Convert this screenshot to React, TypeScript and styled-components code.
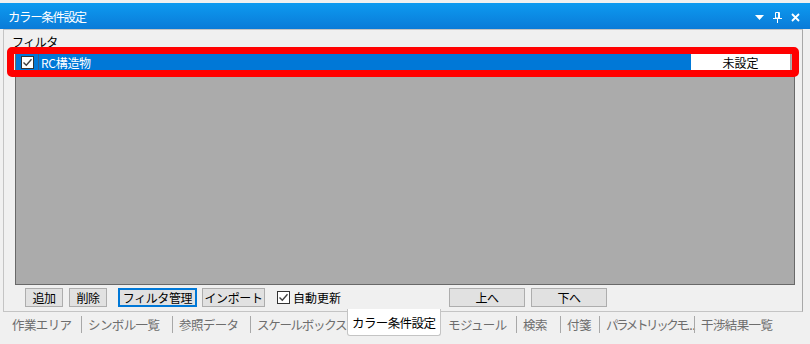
import React from "react";
import styled, { createGlobalStyle } from "styled-components";

const tabs = [
  { label: "作業エリア", w: 76 },
  { label: "シンボル一覧", w: 91 },
  { label: "参照データ", w: 78 },
  { label: "スケールボックス", w: 97, tight: true },
  { label: "カラー条件設定", w: 94, active: true },
  { label: "モジュール", w: 75 },
  { label: "検索", w: 44 },
  { label: "付箋", w: 39 },
  { label: "パラメトリックモ", w: 95, squeeze: true },
  { label: "干渉結果一覧", w: 96 },
];

const CheckMark = () => (
  <svg width="11" height="11" viewBox="0 0 11 11">
    <path d="M1.5 5.5 L4.3 8.3 L9.5 2.2" fill="none" stroke="#404040" strokeWidth="1.4" />
  </svg>
);

const App = () => {
  return (
    <>
      <GlobalStyle />
      <Window>
        <TitleBar>
          <Title>カラー条件設定</Title>
          <Controls>
            <svg width="9" height="5" viewBox="0 0 9 5">
              <path d="M0 0 H9 L4.5 5 Z" fill="#fff" />
            </svg>
            <svg width="9" height="11" viewBox="0 0 9 11">
              <path d="M2.5 0.5 H6.5 V6 H2.5 Z" fill="none" stroke="#fff" />
              <path d="M5.5 0.5 V6" stroke="#fff" />
              <path d="M0 6.5 H9" stroke="#fff" />
              <path d="M4.5 6.5 V11" stroke="#fff" />
            </svg>
            <svg width="9" height="9" viewBox="0 0 9 9">
              <path d="M1 1 L8 8 M8 1 L1 8" stroke="#fff" strokeWidth="1.8" />
            </svg>
          </Controls>
        </TitleBar>
        <Body>
          <GroupLabel>フィルタ</GroupLabel>
          <List>
            <Row>
              <CheckCell>
                <Box>
                  <CheckMark />
                </Box>
              </CheckCell>
              <NameCell>RC構造物</NameCell>
              <StatusCell>未設定</StatusCell>
            </Row>
          </List>
          <ButtonRow>
            <LeftGroup>
              <Button $w={38}>追加</Button>
              <Button $w={38} $ml={6}>
                削除
              </Button>
              <Button $w={79} $ml={11} $focused>
                フィルタ管理
              </Button>
              <Button $w={63} $ml={5}>
                インポート
              </Button>
              <CheckLabel>
                <Box>
                  <CheckMark />
                </Box>
                自動更新
              </CheckLabel>
            </LeftGroup>
            <Button $w={76}>上へ</Button>
            <Button $w={76} $ml={6}>
              下へ
            </Button>
          </ButtonRow>
        </Body>
        <TabBar>
          {tabs.map((t, i) => (
            <Tab
              key={t.label}
              $w={t.w}
              $active={!!t.active}
              $tight={!!t.tight}
              $sep={i > 0 && !t.active && !tabs[i - 1].active}
            >
              {t.squeeze ? (
                <>
                  <Squeeze>{t.label}</Squeeze>...
                </>
              ) : (
                t.label
              )}
            </Tab>
          ))}
        </TabBar>
        <Highlight />
      </Window>
    </>
  );
};

export default App;

const GlobalStyle = createGlobalStyle`
  html, body {
    margin: 0;
    padding: 0;
    background: #f0f0f0;
  }
  body {
    font-family: "Noto Sans CJK JP", "Noto Sans", sans-serif;
    font-size: 12px;
    color: #000;
  }
`;

const Window = styled.div`
  position: relative;
  width: 810px;
  height: 344px;
  padding-top: 3px;
  box-sizing: border-box;
  background: #f0f0f0;
  overflow: hidden;
`;

const TitleBar = styled.div`
  height: 26px;
  display: flex;
  align-items: center;
  padding: 0 10px 0 8px;
  background: linear-gradient(#0d9af0, #0a7bd8);
  color: #fff;
`;

const Title = styled.div`
  font-size: 12.5px;
  letter-spacing: -1.4px;
`;

const Controls = styled.div`
  margin-left: auto;
  display: flex;
  align-items: center;
  gap: 9px;
  padding-top: 2px;
`;

const Body = styled.div`
  margin: 0 7px 0 3px;
  border: 1px solid #c4c4c4;
  border-right-color: #a8a8a8;
  padding: 4px 6px 4px 8px;
`;

const GroupLabel = styled.div`
  height: 16px;
  line-height: 16px;
  font-size: 12px;
  letter-spacing: -0.5px;
`;

const List = styled.div`
  margin: 2px 0 0 3px;
  width: 780px;
  height: 233px;
  box-sizing: border-box;
  border: 1px solid #696969;
  background: #ababab;
`;

const Row = styled.div`
  display: flex;
  height: 19px;
  margin-right: 3px;
`;

const CheckCell = styled.div`
  width: 23px;
  padding-left: 5px;
  box-sizing: border-box;
  display: flex;
  align-items: center;
  background: #0078d7;
  border-right: 1px solid #2f5f93;
`;

const Box = styled.span`
  width: 13px;
  height: 13px;
  box-sizing: border-box;
  border: 1px solid #333;
  background: #fff;
  display: flex;
  align-items: center;
  justify-content: center;
`;

const NameCell = styled.div`
  flex: 1;
  background: #0078d7;
  color: #fff;
  line-height: 19px;
  padding-left: 2px;
  letter-spacing: -0.3px;
`;

const StatusCell = styled.div`
  width: 99px;
  background: #fff;
  border-right: 1px solid #a0a0a0;
  text-align: center;
  line-height: 19px;
`;

const ButtonRow = styled.div`
  display: flex;
  align-items: center;
  margin-top: 3px;
  padding-left: 13px;
`;

const LeftGroup = styled.div`
  width: 424px;
  display: flex;
  align-items: center;
`;

const Button = styled.button<{ $w: number; $ml?: number; $focused?: boolean }>`
  width: ${(p) => p.$w}px;
  height: 19px;
  margin: 0 0 0 ${(p) => p.$ml ?? 0}px;
  padding: 0;
  box-sizing: border-box;
  border: ${(p) => (p.$focused ? "2px solid #0078d7" : "1px solid #adadad")};
  background: #e1e1e1;
  font-family: inherit;
  font-size: 12px;
  letter-spacing: -0.4px;
  color: #000;
  line-height: 15px;
`;

const CheckLabel = styled.label`
  display: flex;
  align-items: center;
  gap: 3px;
  margin-left: 12px;
  font-size: 12px;
`;

const TabBar = styled.div`
  display: flex;
  align-items: flex-start;
  height: 32px;
  padding-left: 5px;
`;

const Tab = styled.div<{ $w: number; $active: boolean; $sep: boolean; $tight: boolean }>`
  position: relative;
  width: ${(p) => p.$w}px;
  box-sizing: border-box;
  white-space: nowrap;
  font-size: 12.5px;
  letter-spacing: ${(p) => (p.$tight ? -1.3 : -0.6)}px;
  padding-left: ${(p) => (p.$active ? 4 : 6)}px;
  margin-top: ${(p) => (p.$active ? -3 : 4)}px;
  height: ${(p) => (p.$active ? 27 : 17)}px;
  line-height: ${(p) => (p.$active ? 27 : 17)}px;
  color: ${(p) => (p.$active ? "#000" : "#6d6d6d")};
  background: ${(p) => (p.$active ? "#fff" : "transparent")};
  border-left: 1px solid ${(p) => (p.$sep ? "#a8a8a8" : p.$active ? "#c4c4c4" : "transparent")};
  border-right: ${(p) => (p.$active ? "1px solid #c4c4c4" : "none")};
  border-bottom: ${(p) => (p.$active ? "1px solid #c4c4c4" : "none")};
  border-radius: ${(p) => (p.$active ? "0 0 3px 3px" : "0")};
`;

const Squeeze = styled.span`
  letter-spacing: -2.4px;
`;

const Highlight = styled.div`
  position: absolute;
  left: 7px;
  top: 47px;
  width: 792px;
  height: 30px;
  box-sizing: border-box;
  border: 7px solid #ff0000;
  border-radius: 5px;
  pointer-events: none;
`;
